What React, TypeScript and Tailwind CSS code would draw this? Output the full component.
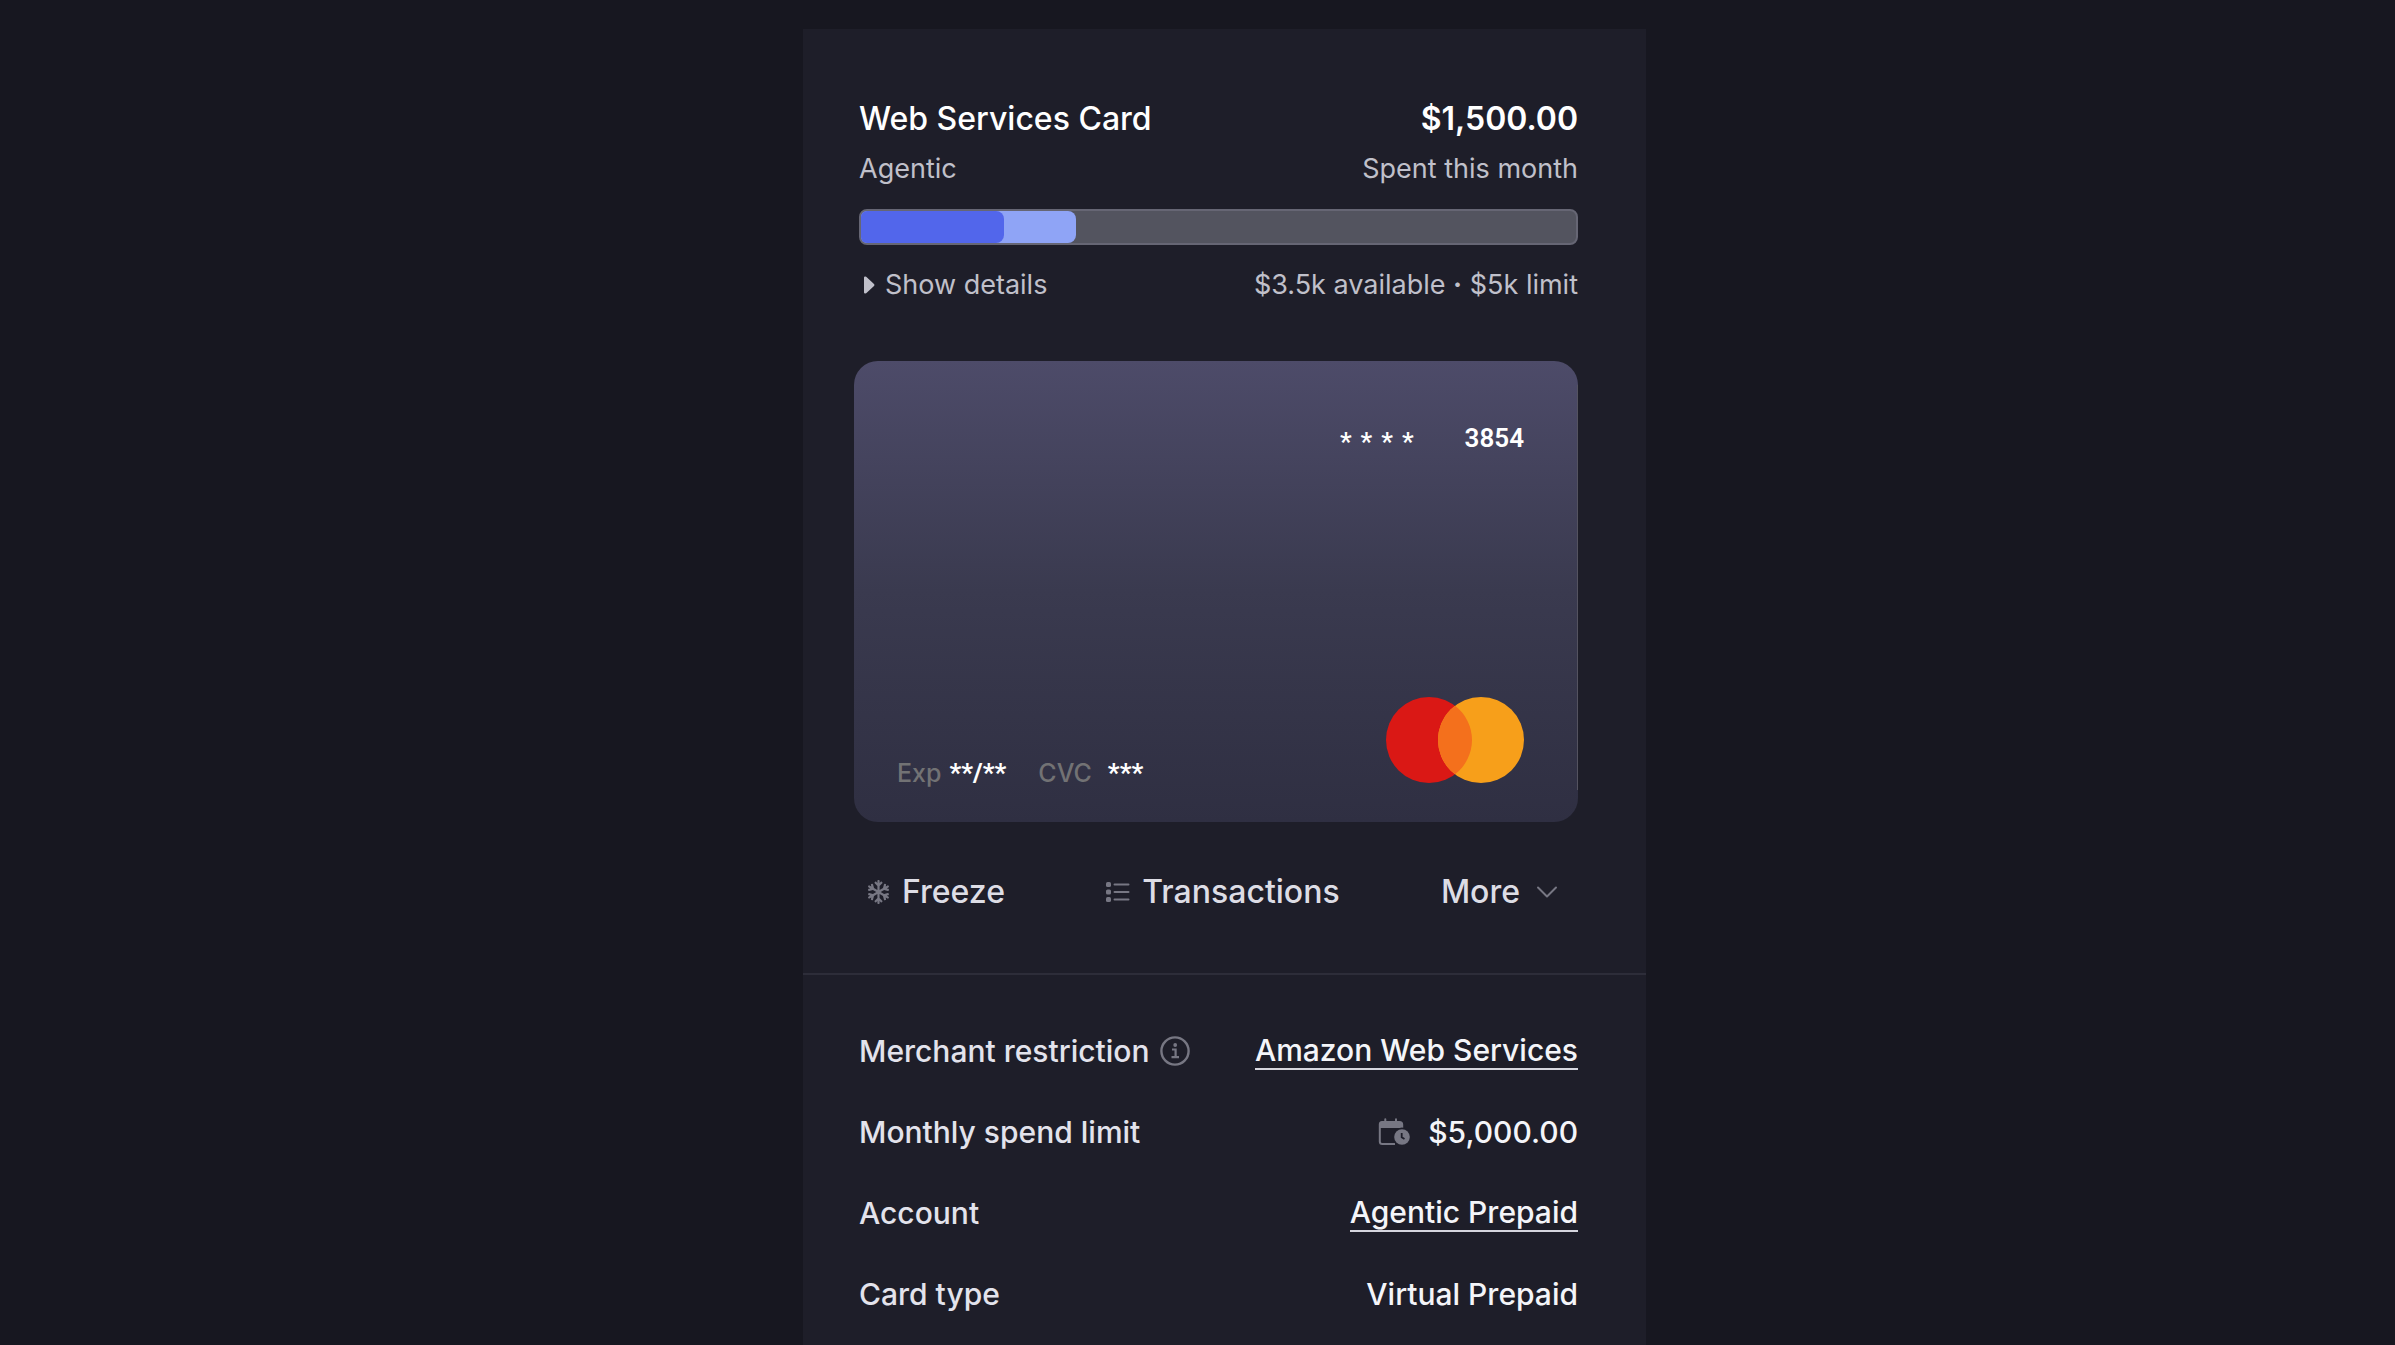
import type { ReactNode } from 'react';
import { clsx } from 'clsx';
import { FaRegSnowflake } from 'react-icons/fa';

interface DetailRowProps {
    label: string;
    hint?: ReactNode;
    children: ReactNode;
}

function ListIcon() {
    return (<svg viewBox="0 0 24 24" className="h-6 w-6" fill="currentColor" aria-hidden="true">
      <rect x="0" y="2" width="5" height="5" rx="1.6"/>
      <rect x="0" y="9.500" width="5" height="5" rx="1.6"/>
      <rect x="0" y="17" width="5" height="5" rx="1.6"/>
      <rect x="7.500" y="3.400" width="16" height="2.200" rx="1"/>
      <rect x="7.500" y="10.900" width="16" height="2.200" rx="1"/>
      <rect x="7.500" y="18.400" width="16" height="2.200" rx="1"/>
    </svg>);
}

function ChevronIcon() {
    return (<svg viewBox="0 0 22 12" className="h-3 w-[22px]" fill="none" stroke="currentColor" strokeWidth="2" strokeLinecap="round" strokeLinejoin="round" aria-hidden="true">
      <path d="M2 1.500 11 10.500 20 1.500"/>
    </svg>);
}

function CaretIcon() {
    return (<svg viewBox="0 0 12 18" className="h-[18px] w-3" fill="currentColor" aria-hidden="true">
      <path d="M1 1.500Q1 .4 2.300.5Q3.200.6 4 1.500L11 8Q12 9 11 10L4 16.500Q3.200 17.400 2.300 17.500Q1 17.600 1 16.500Z"/>
    </svg>);
}

function InfoIcon() {
    return (<svg viewBox="0 0 30 30" className="h-[30px] w-[30px]" fill="none" stroke="currentColor" strokeWidth="2.400" aria-hidden="true">
      <circle cx="15" cy="15" r="13.600"/>
      <path d="M12 13.500h3.600v7.500M11.500 21.200h7.500" strokeWidth="2.200"/>
      <circle cx="15.200" cy="9" r="1.900" fill="currentColor" stroke="none"/>
    </svg>);
}

function CalendarClockIcon() {
    return (<svg viewBox="0 0 32 28" className="h-7 w-8" aria-hidden="true">
      <path d="M1.800 10V23.500Q1.800 26 4.300 26H17" fill="none" stroke="currentColor" strokeWidth="2"/>
      <path d="M.8 10V6.500Q.8 3 4 3H6.300V1.300Q6.300.3 7.300.3Q8.300.3 8.300 1.300V3H17V1.300Q17 .3 18 .3Q19 .3 19 1.300V3H21.500Q25.200 3 25.200 6.500V10Z" fill="currentColor"/>
      <circle cx="24" cy="19" r="9.500" fill="#1e1e29"/>
      <circle cx="24" cy="19" r="7.800" fill="currentColor"/>
      <path d="M23.700 15V19.200L26.500 21" fill="none" stroke="#1e1e29" strokeWidth="1.800"/>
    </svg>);
}

function MastercardLogo() {
    return (<svg viewBox="0 0 138 86" className="h-[86px] w-[138px]" role="img" aria-label="Mastercard">
      <circle cx="43" cy="43" r="43" fill="#da1815"/>
      <circle cx="95" cy="43" r="43" fill="#f79f1a"/>
      <path d="M69 8.760A43 43 0 0 1 69 77.240A43 43 0 0 1 69 8.760Z" fill="#f4701c"/>
    </svg>);
}

function SpendBar({ spent, pending }: { spent: number; pending: number }) {
    return (<div className="mt-5 h-9 overflow-hidden rounded-lg border-2 border-[#666674] bg-[#53545f]">
      <div className="h-full rounded-r-lg bg-[#8fa4f6]" style={{ width: `${spent + pending}%` }}>
        <div className="h-full rounded-r-lg bg-[#5266eb]" style={{ width: `${(spent / (spent + pending)) * 100}%` }}/>
      </div>
    </div>);
}

function VirtualCard() {
    return (<section aria-label="Virtual card" className="relative -ml-[5px] mt-14 flex h-[461px] flex-col justify-between rounded-3xl bg-linear-to-b from-[#4d4b69] via-[#3a3a4f] to-[#2f2f42] pt-[54px] pr-[54px] pb-[39px] pl-[43px] text-white">
      <span className="absolute top-6 right-0 bottom-8 w-px bg-[#545360]"/>
      <p className="flex items-center justify-end gap-[51px] font-['Roboto',sans-serif] text-[26px] leading-[38px] font-semibold">
        <span className="flex gap-[9px] pt-2">
          {[0, 1, 2, 3].map((dot) => (<span key={dot}>*</span>))}
        </span>
        <span>3854</span>
      </p>
      <div className="flex items-end justify-between">
        <p className="flex items-baseline text-[25px] leading-5">
          <span className="font-medium text-[#727274]">Exp</span>
          <span className="ml-2 font-['Roboto',sans-serif] text-[26px] font-bold">**/**</span>
          <span className="ml-8 font-medium text-[#727274]">CVC</span>
          <span className="ml-4 font-['Roboto',sans-serif] text-[26px] font-bold">***</span>
        </p>
        <MastercardLogo />
      </div>
    </section>);
}

function ActionButton({ icon, label, trailing }: { icon: ReactNode; label: string; trailing?: boolean }) {
    return (<button type="button" className={clsx('flex items-center', trailing ? 'flex-row-reverse gap-4' : 'gap-3')}>
      <span className="text-[#777783]">{icon}</span>
      {label}
    </button>);
}

function DetailRow({ label, hint, children }: DetailRowProps) {
    return (<div className="flex items-center justify-between">
      <dt className="flex items-center gap-2.5 text-[#e3e3ec]">
        {label}
        {hint}
      </dt>
      <dd className="flex items-center gap-[18px] text-[#f4f5f9]">{children}</dd>
    </div>);
}

function ValueLink({ children }: { children: ReactNode }) {
    return (<a href="#" className="border-b-2 border-[#d6d6de] leading-9">
      {children}
    </a>);
}

export default function App() {
    return (<div className="grid min-h-screen grid-cols-[803fr_843fr_749fr] bg-[#171720] font-['Inter',sans-serif]">
      <main className="col-start-2 mt-[29px] bg-[#1e1e29]">
        <div className="border-b-2 border-[#2d2d39] pt-[68px] pr-[68px] pb-[59px] pl-14">
          <header className="flex justify-between">
            <div>
              <h1 className="text-[32px] leading-[44px] font-medium text-white">Web Services Card</h1>
              <p className="mt-2 text-[27px] leading-10 text-[#c0c0ca]">Agentic</p>
            </div>
            <div className="text-right">
              <p className="text-[32px] leading-[44px] font-semibold text-white">$1,500.00</p>
              <p className="mt-2 text-[27px] leading-10 text-[#c0c0ca]">Spent this month</p>
            </div>
          </header>

          <SpendBar spent={20} pending={10}/>

          <div className="mt-5 flex justify-between text-[27px] leading-10 text-[#c0c0ca]">
            <button type="button" className="ml-1 flex items-center gap-2.5">
              <CaretIcon />
              Show details
            </button>
            <p>$3.5k available <span className="font-bold">·</span> $5k limit</p>
          </div>

          <VirtualCard />

          <div className="mt-12 flex justify-between pr-5 pl-2 text-[32px] leading-[44px] font-medium text-[#dddde5]">
            <ActionButton icon={<FaRegSnowflake className="h-6 w-[23px]"/>} label="Freeze"/>
            <ActionButton icon={<ListIcon />} label="Transactions"/>
            <ActionButton icon={<ChevronIcon />} label="More" trailing/>
          </div>
        </div>

        <dl className="flex flex-col gap-[41px] pt-14 pr-[68px] pl-14 text-[30px] leading-10 font-medium">
          <DetailRow label="Merchant restriction" hint={<button type="button" aria-label="About merchant restriction" className="text-[#777783]"><InfoIcon /></button>}>
            <ValueLink>Amazon Web Services</ValueLink>
          </DetailRow>
          <DetailRow label="Monthly spend limit">
            <span className="text-[#777783]"><CalendarClockIcon /></span>
            $5,000.00
          </DetailRow>
          <DetailRow label="Account">
            <ValueLink>Agentic Prepaid</ValueLink>
          </DetailRow>
          <DetailRow label="Card type">Virtual Prepaid</DetailRow>
        </dl>
      </main>
    </div>);
}
